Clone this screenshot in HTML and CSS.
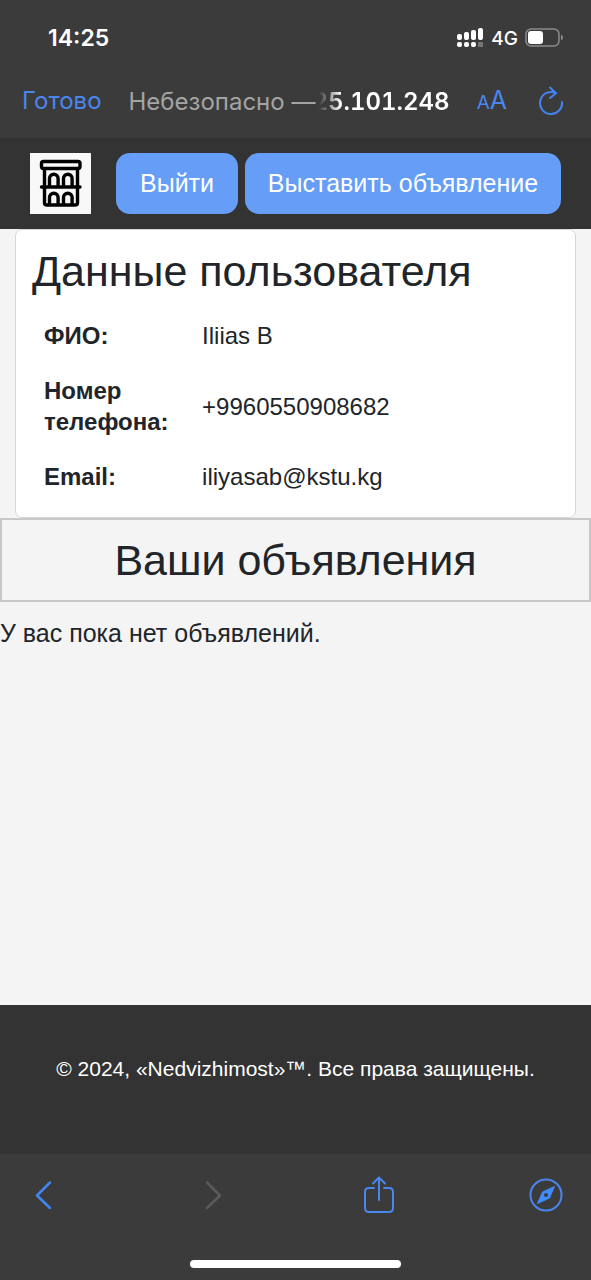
FILE: index.html
```
<!DOCTYPE html>
<html lang="ru">
<head>
<meta charset="utf-8">
<meta name="viewport" content="width=device-width, initial-scale=1">
<title>Nedvizhimost</title>
<link rel="stylesheet" href="styles.css">
</head>
<body class="screen">
<div class="browser-top">
  <div class="status">
    <span class="clock">14:25</span>
    <div class="indicators">
      <svg width="27" height="20" viewBox="0 0 27 20" fill="#fff" aria-hidden="true">
        <rect x="0" y="6" width="5" height="6" rx="2"/><rect x="7" y="4" width="5" height="8" rx="2"/><rect x="14" y="2" width="5" height="10" rx="2"/><rect x="21" y="0" width="5" height="12" rx="2"/>
        <rect x="0" y="14" width="5" height="5" rx="2"/><rect x="7" y="14" width="5" height="5" rx="2"/><rect x="14" y="14" width="5" height="5" rx="2"/><rect x="21" y="14" width="5" height="5" rx="1" opacity=".3"/>
      </svg>
      <span class="network">4G</span>
      <svg width="38" height="20" viewBox="0 0 38 20" aria-hidden="true">
        <rect x="1" y="1" width="33" height="17" rx="5" fill="none" stroke="#8c8c8c" stroke-width="1.500"/>
        <rect x="3" y="3" width="15" height="13" rx="3" fill="#fff"/>
        <path d="M36 6.500q2 1 2 3t-2 3z" fill="#8c8c8c"/>
      </svg>
    </div>
  </div>
  <div class="address">
    <button class="link-btn done">Готово</button>
    <div class="url"><span class="insecure">Небезопасно —</span><span class="host">25.101.248</span></div>
    <button class="link-btn text-size" aria-label="Размер текста"><span class="small-a">A</span>A</button>
    <button class="link-btn" aria-label="Обновить">
      <svg width="26" height="30" viewBox="0 0 26 30" fill="none" stroke="#4285f0" stroke-width="2" stroke-linecap="round" stroke-linejoin="round"><path d="M18 7.200A11 11 0 1 0 24 16M12 1.500L18 7.200L12 12"/></svg>
    </button>
  </div>
</div>

<header class="nav">
  <a class="logo" href="#" aria-label="Nedvizhimost">
    <svg width="61" height="61" viewBox="0 0 61 61" fill="none" stroke="#000" stroke-width="3.400" stroke-linejoin="round" stroke-linecap="round">
      <rect x="11.500" y="8.500" width="38.500" height="7" rx="2"/>
      <path d="M14.500 17V50q0 2 2.500 2H45q2.500 0 2.500-2V17M11.500 34H50"/>
      <path d="M19.500 33V25.500a4.300 4.300 0 0 1 8.600 0V33M33.500 33V25.500a4.300 4.300 0 0 1 8.600 0V33M19.500 51V44.500a4.300 4.300 0 0 1 8.600 0V51M33.500 51V44.500a4.300 4.300 0 0 1 8.600 0V51"/>
    </svg>
  </a>
  <div class="actions">
    <button class="btn">Выйти</button>
    <button class="btn btn-wide">Выставить объявление</button>
  </div>
</header>

<main class="content">
  <section class="card">
    <h2 class="title">Данные пользователя</h2>
    <table class="info">
      <tr><th scope="row">ФИО:</th><td>Iliias B</td></tr>
      <tr><th scope="row">Номер телефона:</th><td>+9960550908682</td></tr>
      <tr><th scope="row">Email:</th><td>iliyasab@kstu.kg</td></tr>
    </table>
  </section>
  <h2 class="title section-title">Ваши объявления</h2>
  <p class="empty">У вас пока нет объявлений.</p>
</main>

<footer class="footer">© 2024, «Nedvizhimost»™. Все права защищены.</footer>

<div class="browser-bottom">
  <div class="toolbar">
    <button class="link-btn tool" aria-label="Назад"><svg width="18" height="30" viewBox="0 0 18 30" fill="none" stroke="#4285f0" stroke-width="2.500" stroke-linecap="round" stroke-linejoin="round"><path d="M15 2.500L2 15.500L15 28"/></svg></button>
    <button class="link-btn tool" aria-label="Вперёд" disabled><svg width="22" height="30" viewBox="0 0 22 30" fill="none" stroke="#5a5a5a" stroke-width="2.500" stroke-linecap="round" stroke-linejoin="round"><path d="M7 2.500L20 15.500L7 28"/></svg></button>
    <button class="link-btn tool" aria-label="Поделиться"><svg width="30" height="38" viewBox="0 0 30 38" fill="none" stroke="#4a86ee" stroke-width="2" stroke-linecap="round" stroke-linejoin="round"><path d="M10 12H5q-4 0-4 4V32q0 4 4 4H25q4 0 4-4V16q0-4-4-4H20M15 24V1.500M9 7.500L15 1.500L21 7.500"/></svg></button>
    <button class="link-btn tool" aria-label="Открыть в браузере"><svg width="34" height="34" viewBox="0 0 34 34"><circle cx="17" cy="17" r="15.500" fill="none" stroke="#4a86ee" stroke-width="2"/><path d="M25.500 8.500L20.500 20L8.500 25.500L13.500 14z" fill="#3f8cfa" stroke="#3f8cfa" stroke-linejoin="round"/><circle cx="17" cy="17" r="2" fill="#3b3b3b"/></svg></button>
  </div>
  <div class="home-bar"></div>
</div>
</body>
</html>
```
FILE: styles.css
```
* { box-sizing: border-box; }

.screen {
  margin: 0;
  min-height: 100vh;
  display: flex;
  flex-direction: column;
  background: #f4f4f4;
  color: #212529;
  font: 24px/31px "Liberation Sans", Arial, sans-serif;
}

.browser-top,
.browser-bottom {
  background: #3b3b3b;
  font-family: Inter, sans-serif;
}

.browser-top { padding-bottom: 12px; }

.status {
  display: flex;
  justify-content: space-between;
  align-items: center;
  height: 76px;
  padding: 0 28px 0 48px;
  color: #fff;
}

.clock { font-size: 23px; font-weight: 600; }

.indicators { display: flex; align-items: center; gap: 7px; }

.network { font-size: 19px; font-weight: 500; }

.address {
  display: flex;
  align-items: center;
  height: 50px;
  gap: 27px;
  padding: 0 27px 0 22px;
}

.link-btn {
  display: flex;
  align-items: center;
  padding: 0;
  border: 0;
  background: none;
  color: #4a86ee;
  font: 25px/30px Inter, sans-serif;
}

.done { font-size: 24px; }

.url {
  flex: 1;
  display: flex;
  justify-content: space-between;
  font-size: 24px;
  white-space: nowrap;
}

.insecure { color: #a4a4a4; }

.host {
  margin-left: -3px;
  color: #fff;
  font-weight: 600;
  font-variant-numeric: tabular-nums;
  -webkit-mask-image: linear-gradient(to right, transparent 6px, #000 28px);
  mask-image: linear-gradient(to right, transparent 6px, #000 28px);
}

.text-size { align-items: baseline; margin-right: 4px; }

.small-a { font-size: 19px; }

.nav {
  display: flex;
  gap: 25px;
  padding: 15px 30px;
  background: #333;
}

.logo { flex: none; height: 61px; background: #f8f8f8; }

.actions { flex: 1; display: flex; gap: 7px; }

.btn {
  padding: 0 24px;
  border: 0;
  border-radius: 14px;
  background: #659df7;
  color: #fff;
  font: 25px/31px "Liberation Sans", Arial, sans-serif;
  white-space: nowrap;
}

.btn-wide { flex: 1; padding: 0; }

.content { flex: 1; }

.card {
  margin: 0 15px;
  padding: 16px 16px 13px;
  border: 1px solid #d6d6d6;
  border-radius: 7px;
  background: #fff;
}

.title {
  margin: 0;
  font-size: 43px;
  line-height: 50px;
  font-weight: 400;
}

.info { width: 100%; margin-top: 12px; border-collapse: collapse; }

.info th,
.info td { padding: 12px; text-align: left; vertical-align: middle; }

.info th { width: 30%; }

.section-title {
  padding: 15px;
  border: 2px solid #c8c8c8;
  text-align: center;
}

.empty { margin: 16px 0; font-size: 25px; }

.footer {
  padding: 48px 16px 70px;
  background: #333;
  color: #fff;
  font-size: 21px;
  text-align: center;
}

.toolbar {
  display: flex;
  justify-content: space-between;
  align-items: center;
  height: 82px;
  padding: 0 17px 0 16px;
}

.tool { justify-content: center; width: 56px; }

.browser-bottom { padding-bottom: 12px; }

.home-bar {
  width: 211px;
  height: 8px;
  margin: 24px auto 0;
  border-radius: 4px;
  background: #fff;
}
```
